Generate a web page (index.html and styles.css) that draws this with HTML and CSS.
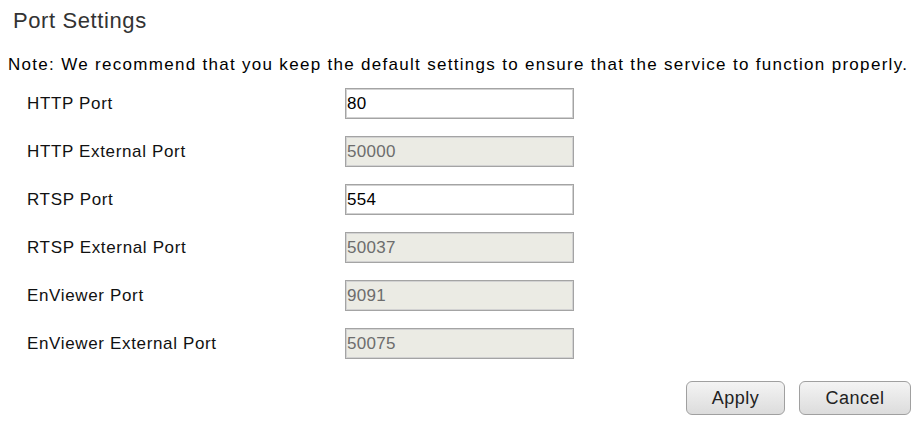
FILE: index.html
```html
<!doctype html>
<html lang="en-us">
  <head>
    <meta charset="utf-8">
    <title>Port Settings</title>
    <link rel="stylesheet" href="styles.css">
  </head>
  <body>
    <div class="page">
      <h1 class="title">Port Settings</h1>
      <p class="note">Note: We recommend that you keep the default settings to ensure that the service to function properly.</p>

      <div class="form">
        <label class="label" for="http-port">HTTP Port</label>
        <input class="field" id="http-port" type="text" value="80">

        <label class="label" for="http-ext">HTTP External Port</label>
        <input class="field" id="http-ext" type="text" value="50000" disabled>

        <label class="label" for="rtsp-port">RTSP Port</label>
        <input class="field" id="rtsp-port" type="text" value="554">

        <label class="label" for="rtsp-ext">RTSP External Port</label>
        <input class="field" id="rtsp-ext" type="text" value="50037" disabled>

        <label class="label" for="ev-port">EnViewer Port</label>
        <input class="field" id="ev-port" type="text" value="9091" disabled>

        <label class="label" for="ev-ext">EnViewer External Port</label>
        <input class="field" id="ev-ext" type="text" value="50075" disabled>
      </div>

      <div class="actions">
        <button class="btn btn-apply" type="button">Apply</button>
        <button class="btn btn-cancel" type="button">Cancel</button>
      </div>
    </div>
  </body>
</html>
```

FILE: styles.css
```css
body {
  margin: 0;
  background: #fff;
  font-family: "Liberation Sans", Arial, sans-serif;
  color: #1a1a1a;
}

.page {
  padding-top: 8px;
}

.title {
  margin: 0 0 20px 13px;
  font-size: 22px;
  line-height: 26px;
  font-weight: normal;
  letter-spacing: 0.6px;
  color: #333;
}

.note {
  margin: 0 0 12px 8px;
  font-size: 17px;
  line-height: 22px;
  letter-spacing: 1.3px;
  color: #000;
}

.form {
  display: grid;
  grid-template-columns: 318px 229px;
  row-gap: 17px;
  align-items: center;
  padding-left: 27px;
}

.label {
  font-size: 17px;
  line-height: 22px;
  letter-spacing: 0.65px;
  color: #111;
}

.field {
  box-sizing: border-box;
  width: 229px;
  height: 31px;
  margin: 0;
  padding: 0 1px;
  border: 1px solid #a4a4a4;
  box-shadow: inset 0 0 0 1px #d2d2d2;
  background: #fff;
  font-family: "Liberation Sans", Arial, sans-serif;
  font-size: 17px;
  letter-spacing: 0.3px;
  color: #000;
  outline: none;
}

.field:disabled {
  background: #ebebe4;
  color: #6d6d6d;
}

.actions {
  display: flex;
  justify-content: flex-end;
  gap: 14px;
  padding: 0 8px 0 0;
  margin-top: 22px;
}

.btn {
  box-sizing: border-box;
  height: 34px;
  border: 1px solid #a0a0a0;
  border-radius: 6px;
  background: linear-gradient(#f4f4f4, #dcdcdc);
  font-family: "Liberation Sans", Arial, sans-serif;
  font-size: 18px;
  letter-spacing: 0.5px;
  color: #222;
  padding: 0;
}

.btn-apply {
  width: 99px;
}

.btn-cancel {
  width: 112px;
}
```
